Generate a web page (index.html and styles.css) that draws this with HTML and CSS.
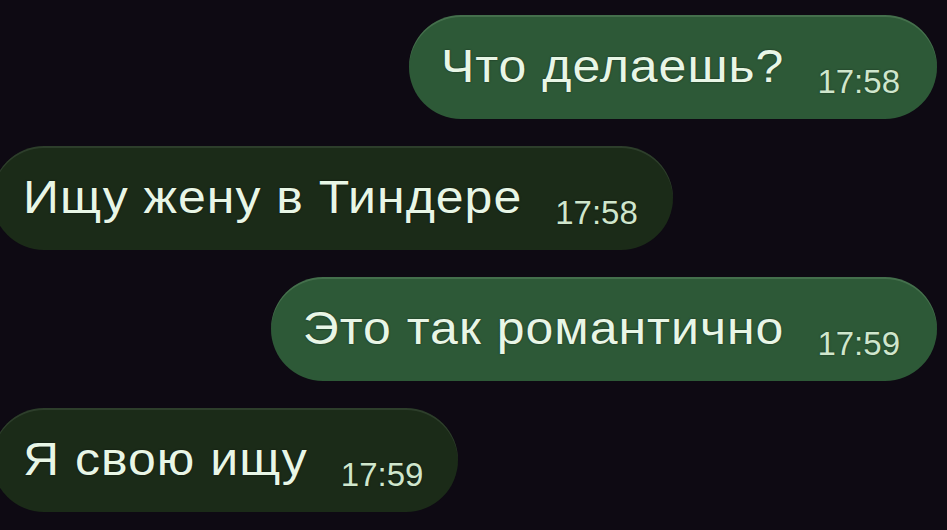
FILE: index.html
```html
<!DOCTYPE html>
<html lang="ru">
<head>
<meta charset="utf-8">
<title>Чат</title>
<link rel="stylesheet" href="styles.css">
</head>
<body>
<div class="chat">
  <div class="msg out">
    <span class="txt">Что делаешь?</span>
    <span class="time">17:58</span>
  </div>
  <div class="msg in">
    <span class="txt">Ищу жену в Тиндере</span>
    <span class="time">17:58</span>
  </div>
  <div class="msg out">
    <span class="txt">Это так романтично</span>
    <span class="time">17:59</span>
  </div>
  <div class="msg in">
    <span class="txt">Я свою ищу</span>
    <span class="time">17:59</span>
  </div>
</div>
</body>
</html>
```
FILE: styles.css
```css
html, body {
  margin: 0;
  padding: 0;
}
body {
  width: 947px;
  height: 530px;
  overflow: hidden;
  background: #0e0a13;
  font-family: "Liberation Sans", Arial, sans-serif;
}
.chat {
  display: flex;
  flex-direction: column;
  gap: 27px;
  padding: 15px 10px 0 0;
}
.msg {
  box-sizing: border-box;
  height: 104px;
  border-radius: 52px;
  display: flex;
  align-items: flex-start;
  white-space: nowrap;
}
.out {
  align-self: flex-end;
  background: #2d5937;
  box-shadow: inset 0 2px 0 rgba(140, 180, 140, 0.25);
  padding: 0 37px 0 32px;
}
.in {
  align-self: flex-start;
  margin-left: -8px;
  background: #1b2b18;
  box-shadow: inset 0 2px 0 rgba(120, 140, 120, 0.2);
  padding: 0 35px 0 31px;
}
.txt {
  display: inline-block;
  margin-top: 25px;
  font-size: 50px;
  line-height: 50px;
  letter-spacing: 1px;
  color: #e8f6e6;
  transform: scaleY(0.92);
  transform-origin: 0 42px;
  text-shadow: 0 0 2px rgba(0, 0, 0, 0.6);
}
.time {
  display: inline-block;
  margin-top: 50px;
  margin-left: 33px;
  font-size: 33px;
  line-height: 33px;
  color: #cfe6cc;
  text-shadow: 0 0 2px rgba(0, 0, 0, 0.5);
}
```
